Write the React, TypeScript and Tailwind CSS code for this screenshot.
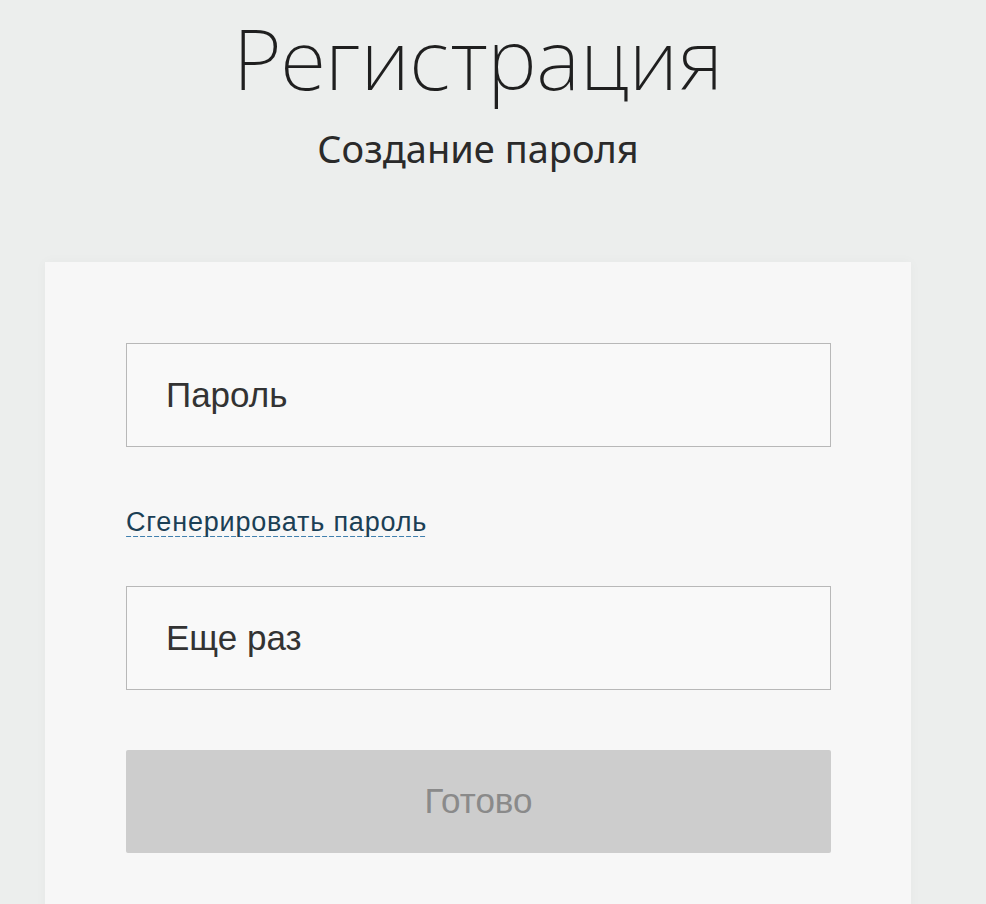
import React from "react";

const Field = ({ placeholder }: { placeholder: string }) => (
  <input
    type="password"
    placeholder={placeholder}
    className="block h-[104px] w-full border border-[#b8b8b8] bg-[#f9f9f9] pl-[39px] text-[35px] text-[#333] outline-none placeholder:text-[#333] [font-family:'Liberation_Sans',Arial,sans-serif]"
  />
);

const App = () => {
  return (
    <div className="min-h-[904px] w-full overflow-hidden bg-[#eceeed]">
      <div className="flex flex-col items-center pr-[30px]">
        <h1 className="h-[116px] text-[84px] font-extralight leading-[116px] text-[#1f1f1f] [font-family:'Noto_Sans','Open_Sans',sans-serif]">
          Регистрация
        </h1>
        <p className="mt-[6px] h-[52px] text-[38px] leading-[52px] text-[#2a2a2a] [font-family:'Noto_Sans','Open_Sans',sans-serif]">
          Создание пароля
        </p>
      </div>

      <div className="ml-[45px] mt-[88px] w-[866px] bg-[#f7f7f7] px-[81px] pt-[81px] pb-[60px] shadow-[0_0_12px_rgba(0,0,0,0.03)]">
        <div className="w-[705px]">
          <Field placeholder="Пароль" />

          <div className="mt-[60px] h-[30px] leading-[30px]">
            <a
              href="#"
              className="bg-[linear-gradient(to_right,#3f7fae_70%,transparent_0)] bg-[length:7px_1px] bg-bottom bg-repeat-x text-[27px] tracking-[0.8px] text-[#1b3f55] no-underline [font-family:'Liberation_Sans',Arial,sans-serif]"
            >
              Сгенерировать пароль
            </a>
          </div>

          <div className="mt-[49px]">
            <Field placeholder="Еще раз" />
          </div>

          <button
            disabled
            className="mt-[60px] flex h-[103px] w-full items-center justify-center rounded-[2px] bg-[#cdcdcd] text-[35px] text-[#8a8a8a] [font-family:'Liberation_Sans',Arial,sans-serif]"
          >
            Готово
          </button>
        </div>
      </div>
    </div>
  );
};

export default App;
